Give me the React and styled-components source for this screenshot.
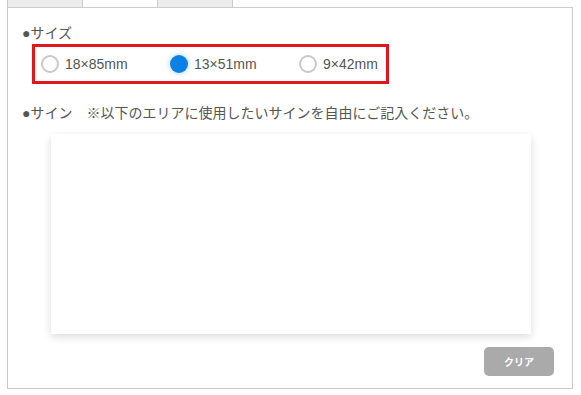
import React, { useState } from "react";
import styled, { createGlobalStyle } from "styled-components";

const Global = createGlobalStyle`
  html, body { margin: 0; padding: 0; background: #fff; }
  body { font-family: "Liberation Sans", "Noto Sans CJK JP", sans-serif; color: #555; }
  * { box-sizing: border-box; }
`;

const Page = styled.div`
  width: 581px;
  height: 395px;
  background: #fff;
  overflow: hidden;
`;

const TabBar = styled.div`
  display: flex;
  margin-left: 7px;
  height: 7px;
`;

const Tab = styled.div`
  width: ${(p) => (p.$first ? 76 : 75)}px;
  height: 7px;
  background: ${(p) => (p.$active ? "#fff" : "#ececec")};
  border-left: ${(p) => (p.$first ? "1px solid #ccc" : "none")};
  border-right: 1px solid #ccc;
`;

const Panel = styled.div`
  margin-left: 7px;
  width: 566px;
  height: 382px;
  border: 1px solid #ccc;
  padding: 15px 14px 0 14px;
  display: flex;
  flex-direction: column;
`;

const Label = styled.div`
  font-size: 14px;
  line-height: 20px;
  color: #555;
  margin-top: ${(p) => p.$mt || 0}px;
  white-space: nowrap;
`;

const RadioGroup = styled.div`
  margin-top: 1px;
  margin-left: 10px;
  width: 357px;
  height: 40px;
  border: 3px solid #e3161b;
  display: flex;
  align-items: center;
  padding-left: 6px;
`;

const RadioItem = styled.label`
  flex: none;
  width: ${(p) => (p.$last ? "auto" : "129px")};
  display: inline-flex;
  align-items: center;
  gap: 6px;
  font-size: 14px;
  color: #555;
  cursor: pointer;
`;

const RadioDot = styled.span`
  width: 18px;
  height: 18px;
  border-radius: 50%;
  flex: none;
  background: ${(p) => (p.$checked ? "#0b80e5" : "#fff")};
  border: ${(p) => (p.$checked ? "none" : "2px solid #c8c8c8")};
  box-shadow: ${(p) => (p.$checked ? "0 0 6px rgba(11,128,229,0.35)" : "none")};
`;

const Canvas = styled.div`
  margin-top: 11px;
  margin-left: 29px;
  width: 480px;
  height: 200px;
  background: #fff;
  box-shadow: 0 3px 8px rgba(0, 0, 0, 0.14);
`;

const ButtonRow = styled.div`
  display: flex;
  justify-content: flex-end;
  margin-top: 13px;
  padding-right: 4px;
`;

const ClearButton = styled.button`
  width: 70px;
  height: 29px;
  border: none;
  border-radius: 5px;
  background: #aaa;
  color: #fff;
  font-family: "Noto Sans CJK JP", sans-serif;
  font-size: 10px;
  font-weight: bold;
  cursor: pointer;
`;

const sizes = ["18×85mm", "13×51mm", "9×42mm"];

export default function App() {
  const [sel, setSel] = useState(1);
  return (
    <Page>
      <Global />
      <TabBar>
        <Tab $first />
        <Tab $active />
        <Tab />
      </TabBar>
      <Panel>
        <Label>●サイズ</Label>
        <RadioGroup>
          {sizes.map((s, i) => (
            <RadioItem key={s} $last={i === sizes.length - 1} onClick={() => setSel(i)}>
              <RadioDot $checked={sel === i} />
              {s}
            </RadioItem>
          ))}
        </RadioGroup>
        <Label $mt={19}>●サイン　※以下のエリアに使用したいサインを自由にご記入ください。</Label>
        <Canvas />
        <ButtonRow>
          <ClearButton>クリア</ClearButton>
        </ButtonRow>
      </Panel>
    </Page>
  );
}
